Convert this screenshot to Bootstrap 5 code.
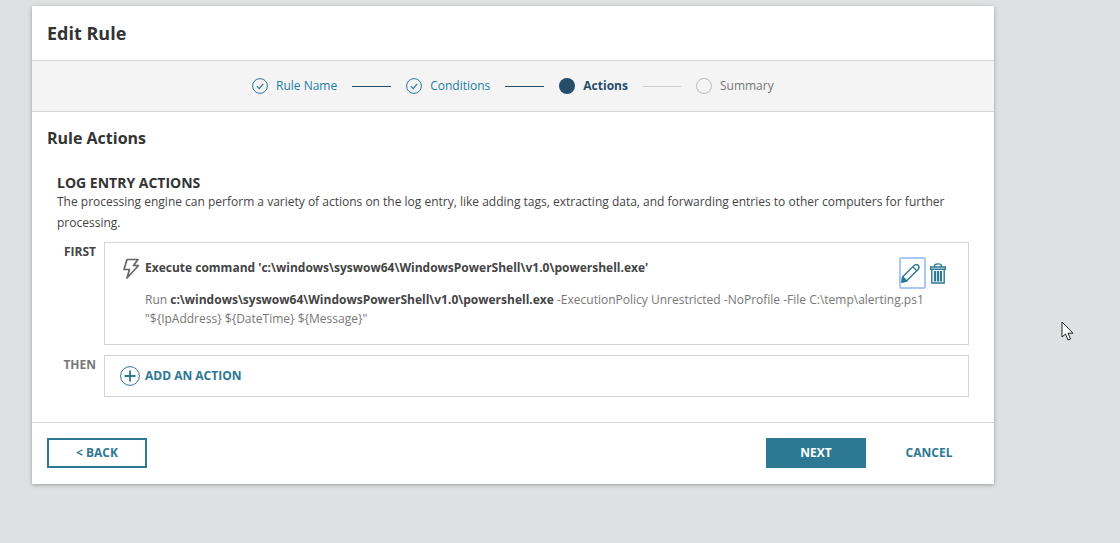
<!DOCTYPE html>
<html lang="en">
<head>
<meta charset="utf-8">
<title>Edit Rule</title>
<link rel="stylesheet" href="https://cdn.jsdelivr.net/npm/bootstrap@5.3.0/dist/css/bootstrap.min.css">
<style>
html,body{height:543px;overflow:hidden}
body{background:#dfe0e1;font-family:"Open Sans","Liberation Sans",sans-serif;color:#333;font-size:12px;line-height:18px;position:relative}
.shell{width:962px;height:478px;margin:6px 0 0 32px;background:#fff;border:0;border-radius:0;box-shadow:0 1px 4px rgba(0,0,0,.3)}
.head{height:55px;padding:0 15px;border-bottom:1px solid #d5d5d5}
.head h1{font-size:18px;font-weight:700;margin:0;color:#333;line-height:54px}
.stepper{height:51px;background:#f4f4f4;border-bottom:1px solid #d5d5d5;padding-left:220px}
.stp{font-size:12px;display:flex;align-items:center;gap:8px}
.stp.done{color:#1c7fa6}
.stp.now{color:#264d68;font-weight:700}
.stp.todo{color:#777}
.lnk{width:39px;height:1px;margin:0 15px;background:#264d68}
.lnk.off{background:#d0d0d0;width:38px}
.dot{width:16px;height:16px;border-radius:50%;background:#264d68}
.ring{width:16px;height:16px;border-radius:50%;border:1px solid #bbb}
.sect{font-size:16px;font-weight:700;margin:0;padding:15px 15px 0;line-height:22px;color:#333}
.sub{padding:25px 25px 0}
.sub h2{font-size:14px;font-weight:700;margin:0;line-height:17px;color:#333}
.sub p{font-size:12px;line-height:21px;margin:0;color:#444}
.rowish{display:flex}
.lbl{width:47px;flex:none;text-align:right;padding-right:8px;font-weight:700;font-size:12px;color:#444}
.lbl.dim{color:#777}
.lbl.l1{margin-top:10px}
.lbl.l2{margin-top:11px}
.bx{width:865px;border:1px solid #d5d5d5;background:#fff}
.b1{height:103px;margin-top:9px;padding:13px 15px 0 17px;position:relative}
.b1 .ttl{font-size:12px;font-weight:700;color:#444;display:flex;align-items:center;gap:5px;line-height:24px}
.b1 .txt{font-size:12px;line-height:19px;margin:10px 15px 0 23px;color:#777}
.b1 .txt b{font-weight:700;color:#444}
.acts{position:absolute;top:14px;right:22px;display:flex;align-items:center;gap:4px}
.pen{width:27px;height:32px;border:2px solid #a9c8f7;border-radius:2px;display:flex;align-items:center;justify-content:center;padding-right:3px}
.b2{height:42px;margin-top:10px;padding:0 15px;display:flex;align-items:center;gap:5px;color:#2d7893;font-weight:700;font-size:12px}
.foot{height:62px;margin-top:25px;border-top:1px solid #d5d5d5;padding:15px 15px 0}
.bb{width:100px;height:30px;border-radius:0;font-size:12px;font-weight:700;padding:0;display:flex;align-items:center;justify-content:center;line-height:1}
.bk{border:2px solid #2d7893;color:#2d7893;background:#fff}
.nx{border:0;background:#2d7893;color:#fff}
.cn{border:0;color:#2d7893;background:transparent;width:86px;margin-left:20px;margin-right:7px}
.curs{position:absolute;left:1061px;top:321px}
</style>
</head>
<body>
<div class="card shell">
  <div class="head"><h1>Edit Rule</h1></div>
  <div class="stepper d-flex align-items-center">
    <div class="stp done"><svg width="16" height="16" viewBox="0 0 16 16" fill="none" stroke="#2d7893"><circle cx="8" cy="8" r="7.4"/><path d="M4.8 8.2 7.2 10.6 11.2 5.8" stroke-width="1.2"/></svg>Rule Name</div>
    <div class="lnk"></div>
    <div class="stp done"><svg width="16" height="16" viewBox="0 0 16 16" fill="none" stroke="#2d7893"><circle cx="8" cy="8" r="7.4"/><path d="M4.8 8.2 7.2 10.6 11.2 5.8" stroke-width="1.2"/></svg>Conditions</div>
    <div class="lnk"></div>
    <div class="stp now"><span class="dot"></span>Actions</div>
    <div class="lnk off"></div>
    <div class="stp todo"><span class="ring"></span>Summary</div>
  </div>
  <h3 class="sect">Rule Actions</h3>
  <div class="sub">
    <h2>LOG ENTRY ACTIONS</h2>
    <p>The processing engine can perform a variety of actions on the log entry, like adding tags, extracting data, and forwarding entries to other computers for further processing.</p>
    <div class="rowish">
      <div class="lbl l1">FIRST</div>
      <div class="bx b1">
        <div class="ttl">
          <svg width="18" height="21" viewBox="0 0 18 21" fill="none" stroke="#666" stroke-width="1.7" stroke-linejoin="round"><path d="M5 1.500h11L11.500 7.500h5L5 20l2.500-8.500H2z"/></svg>
          <span>Execute command 'c:\windows\syswow64\WindowsPowerShell\v1.0\powershell.exe'</span>
        </div>
        <div class="txt">Run <b>c:\windows\syswow64\WindowsPowerShell\v1.0\powershell.exe</b> -ExecutionPolicy Unrestricted -NoProfile -File C:\temp\alerting.ps1 "${IpAddress} ${DateTime} ${Message}"</div>
        <div class="acts">
          <div class="pen"><svg width="20" height="20" viewBox="0 0 20 20" fill="none" stroke="#2d7893" stroke-width="1.4" stroke-linejoin="round"><path d="M1.500 14 12.800 2.700c1.400-1.400 3.300-1.500 4.400-.4s1 3-.4 4.400L5.500 18 1 19z"/><path d="M12 4l4 4" stroke-width="1.100"/><path d="M1 19l.8-5 4 4z" fill="#2d7893"/></svg></div>
          <svg width="16" height="21" viewBox="0 0 16 21" fill="none" stroke="#2d7893" stroke-width="1.400"><path d="M4.500 4V3C4.500 1.600 5.800.9 8 .9s3.500.7 3.500 2.100v1"/><path d="M.5 4h15v2.200H.5z" fill="#fff"/><path d="M1.800 6.200V20h12.400V6.200"/><path d="M5 8V18.500M8 8V18.500M11 8V18.500" stroke-width="2.200"/></svg>
        </div>
      </div>
    </div>
    <div class="rowish">
      <div class="lbl dim l2">THEN</div>
      <div class="bx b2">
        <svg width="20" height="20" viewBox="0 0 20 20" fill="none" stroke="#2d7893"><circle cx="10" cy="10" r="9.400"/><path d="M10 4.500v11M4.500 10h11" stroke-width="1.800"/></svg>
        <span>ADD AN ACTION</span>
      </div>
    </div>
  </div>
  <div class="foot d-flex align-items-start">
    <button type="button" class="btn bb bk">&lt; BACK</button>
    <button type="button" class="btn bb nx ms-auto">NEXT</button>
    <button type="button" class="btn bb cn">CANCEL</button>
  </div>
</div>
<svg class="curs" width="14" height="21" viewBox="0 0 14 21"><path d="M1 1v15l3.500-3 2.500 6 2.500-1-2.500-5.800H12z" fill="#fff" stroke="#222" stroke-width="1"/></svg>
<script src="https://cdn.jsdelivr.net/npm/bootstrap@5.3.0/dist/js/bootstrap.bundle.min.js"></script>
</body>
</html>
